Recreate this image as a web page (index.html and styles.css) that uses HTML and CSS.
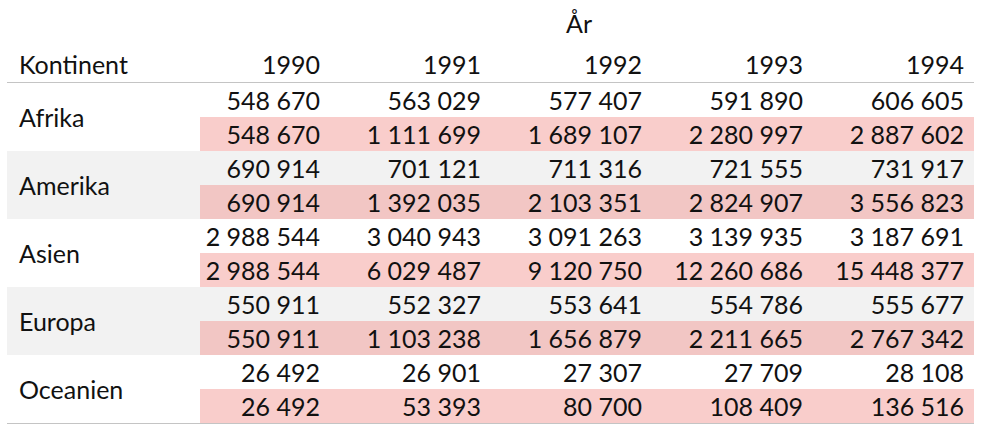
FILE: index.html
```html
<!DOCTYPE html>
<html lang="sv">
<head>
<meta charset="utf-8">
<title>Befolkning per kontinent</title>
<link rel="stylesheet" href="styles.css">
</head>
<body>
<table class="tbl">
  <colgroup>
    <col class="c-name">
    <col class="c-first">
    <col class="c-year">
    <col class="c-year">
    <col class="c-year">
    <col class="c-year">
  </colgroup>
  <thead>
    <tr class="spanner-row">
      <th></th>
      <th colspan="5" class="spanner">År</th>
    </tr>
    <tr class="head-row">
      <th class="name">Kontinent</th>
      <th class="num">1990</th>
      <th class="num">1991</th>
      <th class="num">1992</th>
      <th class="num">1993</th>
      <th class="num">1994</th>
    </tr>
  </thead>
  <tbody>
    <tr>
      <td class="name" rowspan="2">Afrika</td>
      <td class="num">548 670</td><td class="num">563 029</td><td class="num">577 407</td><td class="num">591 890</td><td class="num">606 605</td>
    </tr>
    <tr class="cum">
      <td class="num">548 670</td><td class="num">1 111 699</td><td class="num">1 689 107</td><td class="num">2 280 997</td><td class="num">2 887 602</td>
    </tr>
    <tr class="alt">
      <td class="name" rowspan="2">Amerika</td>
      <td class="num">690 914</td><td class="num">701 121</td><td class="num">711 316</td><td class="num">721 555</td><td class="num">731 917</td>
    </tr>
    <tr class="alt cum">
      <td class="num">690 914</td><td class="num">1 392 035</td><td class="num">2 103 351</td><td class="num">2 824 907</td><td class="num">3 556 823</td>
    </tr>
    <tr>
      <td class="name" rowspan="2">Asien</td>
      <td class="num">2 988 544</td><td class="num">3 040 943</td><td class="num">3 091 263</td><td class="num">3 139 935</td><td class="num">3 187 691</td>
    </tr>
    <tr class="cum">
      <td class="num">2 988 544</td><td class="num">6 029 487</td><td class="num">9 120 750</td><td class="num">12 260 686</td><td class="num">15 448 377</td>
    </tr>
    <tr class="alt">
      <td class="name" rowspan="2">Europa</td>
      <td class="num">550 911</td><td class="num">552 327</td><td class="num">553 641</td><td class="num">554 786</td><td class="num">555 677</td>
    </tr>
    <tr class="alt cum">
      <td class="num">550 911</td><td class="num">1 103 238</td><td class="num">1 656 879</td><td class="num">2 211 665</td><td class="num">2 767 342</td>
    </tr>
    <tr>
      <td class="name" rowspan="2">Oceanien</td>
      <td class="num">26 492</td><td class="num">26 901</td><td class="num">27 307</td><td class="num">27 709</td><td class="num">28 108</td>
    </tr>
    <tr class="cum last">
      <td class="num">26 492</td><td class="num">53 393</td><td class="num">80 700</td><td class="num">108 409</td><td class="num">136 516</td>
    </tr>
  </tbody>
</table>
</body>
</html>
```

FILE: styles.css
```css
html, body {
  margin: 0;
  background: #ffffff;
}

body {
  padding: 6px 0 0 7px;
  font-family: Lato, "Open Sans", "Liberation Sans", sans-serif;
  font-size: 25px;
  color: #111111;
}

.tbl {
  border-collapse: collapse;
  table-layout: fixed;
  width: 966px;
}

.c-name { width: 193px; }
.c-first { width: 130px; }
.c-year { width: 161px; }

.tbl th,
.tbl td {
  padding: 0;
  height: 34px;
  line-height: 34px;
  font-weight: 400;
  white-space: nowrap;
}

.spanner-row th {
  height: 34px;
  padding-bottom: 7px;
}

.spanner {
  text-align: center;
  padding-right: 16px !important;
}

.head-row th {
  height: 35px;
  border-bottom: 1px solid #c4c4c4;
  vertical-align: top;
}

.name {
  text-align: left;
  padding-left: 12px !important;
  vertical-align: middle;
}

.num {
  text-align: right;
  padding-right: 10px !important;
}

.alt td {
  background: #f2f2f2;
}

.cum td {
  background: #f9cdcb;
}

.alt.cum td {
  background: #f2c6c4;
}

tbody tr:last-child td,
tbody tr:nth-last-child(2) td.name {
  border-bottom: 1px solid #c4c4c4;
}
```
